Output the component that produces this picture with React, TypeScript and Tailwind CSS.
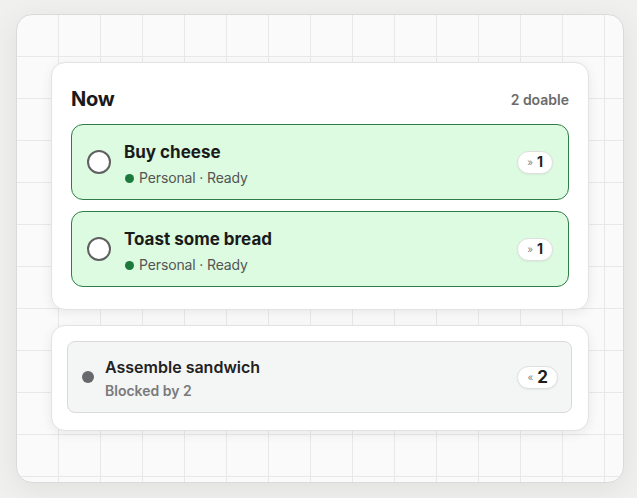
import React from 'react'

const tasks = [
  { title: 'Buy cheese', area: 'Personal', status: 'Ready', next: 1 },
  { title: 'Toast some bread', area: 'Personal', status: 'Ready', next: 1 },
]

const Badge = ({ arrow, count, big }: { arrow: string; count: number; big?: boolean }) => (
  <div className="flex items-center gap-[4px] h-[23px] px-[9px] rounded-full bg-white border border-[#dedede] shadow-[0_1px_2px_rgba(0,0,0,0.05)]">
    <span className="text-[10px] leading-none text-[#8a8a8a]">{arrow}</span>
    <span className={`${big ? 'text-[17px]' : 'text-[14px]'} font-bold leading-none text-[#1e1e1e]`}>{count}</span>
  </div>
)

export default function App() {
  return (
    <div
      className="w-[637px] h-[498px] bg-[#f0f0ef] pt-[14px] pl-[16px]"
      style={{ fontFamily: 'Inter, "Noto Sans", sans-serif' }}
    >
      <div className="w-[608px] h-[469px] rounded-[16px] border border-[#dadada] bg-[#fafafa] bg-[linear-gradient(to_right,#e8e8e8_1px,transparent_1px),linear-gradient(to_bottom,#e8e8e8_1px,transparent_1px)] bg-[size:42px_42px] bg-[position:-1px_-1px] shadow-[0_6px_30px_rgba(0,0,0,0.07)] pt-[47px] px-[34px] flex flex-col gap-[15px]">
        {/* Now list */}
        <section className="w-[538px] rounded-[14px] bg-white border border-[#e2e2e2] shadow-[0_3px_12px_rgba(0,0,0,0.07)] px-[19px] pt-[22px] pb-[22px]">
          <div className="flex items-center justify-between h-[28px] mb-[11px]">
            <h2 className="text-[20px] font-bold text-[#1a1a1a] tracking-[-0.01em]">Now</h2>
            <span className="text-[14px] font-semibold text-[#6b6b6b]">2 doable</span>
          </div>
          <div className="flex flex-col gap-[11px]">
            {tasks.map((t) => (
              <div
                key={t.title}
                className="h-[76px] rounded-[12px] bg-[#dcfbe0] border border-[#2f7d47] flex items-center pl-[15px] pr-[15px]"
              >
                <div className="w-[24px] h-[24px] rounded-full bg-white border-2 border-[#606060] shrink-0" />
                <div className="ml-[13px] flex-1 flex flex-col gap-[7px] pt-[5px]">
                  <div className="text-[17px] font-bold leading-[20px] text-[#1a1a1a]">{t.title}</div>
                  <div className="flex items-center gap-[5px] text-[14px] leading-[18px] text-[#555555] tracking-[-0.01em]">
                    <span className="w-[9px] h-[9px] rounded-full bg-[#1e7a3c] ml-[1px]" />
                    <span>{t.area} · {t.status}</span>
                  </div>
                </div>
                <Badge arrow="»" count={t.next} />
              </div>
            ))}
          </div>
        </section>

        {/* Blocked list */}
        <section className="w-[538px] rounded-[14px] bg-white border border-[#e2e2e2] shadow-[0_3px_12px_rgba(0,0,0,0.07)] pl-[15px] pr-[16px] pt-[15px] pb-[17px]">
          <div className="h-[72px] rounded-[8px] bg-[#f4f5f5] border border-[#d9d9d9] flex items-center pl-[14px] pr-[13px]">
            <span className="w-[12px] h-[12px] rounded-full bg-[#666a6c] shrink-0" />
            <div className="ml-[11px] flex-1 flex flex-col gap-[5px] pt-[2px]">
              <div className="text-[16px] font-semibold leading-[20px] text-[#222222]">Assemble sandwich</div>
              <div className="text-[14px] font-semibold leading-[18px] text-[#7a7a7a]">Blocked by 2</div>
            </div>
            <Badge arrow="«" count={2} big />
          </div>
        </section>
      </div>
    </div>
  )
}
